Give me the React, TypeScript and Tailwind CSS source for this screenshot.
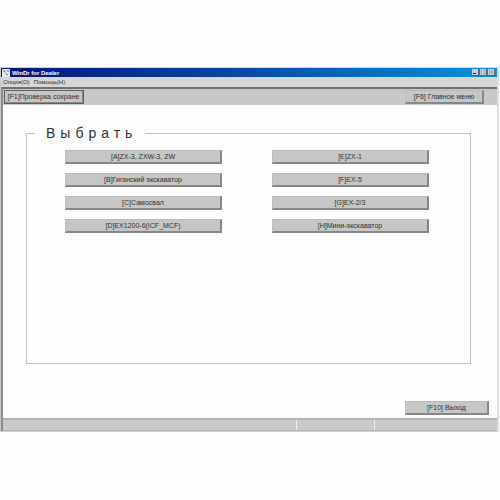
import { clsx } from "clsx";
import type { ReactNode } from "react";

interface Machine {
  hotkey: string;
  name: string;
}

const machines: Machine[] = [
  { hotkey: "A", name: "ZX-3, ZXW-3, ZW" },
  { hotkey: "E", name: "ZX-1" },
  { hotkey: "B", name: "Гиганский экскаватор" },
  { hotkey: "F", name: "EX-5" },
  { hotkey: "C", name: "Самосвал" },
  { hotkey: "G", name: "EX-2/3" },
  { hotkey: "D", name: "EX1200-6(ICF_MCF)" },
  { hotkey: "H", name: "Мини-экскаватор" },
];

function BevelButton({ children, className }: { children: ReactNode; className?: string }) {
  return (
    <button
      type="button"
      className={clsx(
        "flex h-[14px] items-center justify-center whitespace-nowrap border-t border-l border-r-2 border-b-2 border-t-[#bababa] border-l-[#bebebe] border-r-[#868686] border-b-[#868686] bg-[#c6c6c6] text-[7px] leading-[8px] text-[#303030]",
        className
      )}
    >
      {children}
    </button>
  );
}

function CaptionButton({ label, children }: { label: string; children: ReactNode }) {
  return (
    <button
      type="button"
      aria-label={label}
      className="flex h-[7px] w-[7px] items-center justify-center border-r border-b border-[#566575] bg-[#c9d0d5]"
    >
      <svg viewBox="0 0 6 6" className="h-[6px] w-[6px]" fill="none">
        {children}
      </svg>
    </button>
  );
}

function TitleBar() {
  return (
    <header className="flex h-[9px] items-center bg-linear-to-r from-[#06107c] via-[#084ba8] to-[#0a93dc] pr-[2px] pl-px">
      <svg viewBox="0 0 8 8" className="h-2 w-2" aria-hidden="true">
        <rect width="8" height="8" fill="#e9e9e9" />
        <path d="M1 2h2.500M5 2h2M3 3.500l1 1M4.500 5.500h1.500" stroke="#5a5e70" strokeWidth="1" fill="none" />
      </svg>
      <h1 className="ml-[2px] flex-1 text-[6px] leading-[8px] font-bold whitespace-nowrap text-white">
        WinDr for Dealer
      </h1>
      <div className="flex gap-px">
        <CaptionButton label="Свернуть">
          <path d="M1 4.5h3" stroke="#202020" />
        </CaptionButton>
        <CaptionButton label="Развернуть">
          <path d="M1 1.5h4v3H1z" stroke="#9aa2a9" strokeWidth="0.7" />
        </CaptionButton>
        <CaptionButton label="Закрыть">
          <path d="M1 1l4 4M5 1L1 5" stroke="#7c858c" strokeWidth="0.7" />
        </CaptionButton>
      </div>
    </header>
  );
}

export default function App() {
  return (
    <div className="min-h-screen bg-[#fefefe] pt-[67px] font-['Liberation_Sans',Arial,sans-serif]">
      <div className="mr-px border-t border-r-2 border-b border-l border-t-[#d4d4d4] border-r-[#dedede] border-b-[#d0d0d0] border-l-[#c8c8c8]">
        <TitleBar />
        <nav className="flex h-[10px] items-center gap-[4px] bg-[#d6d6d6] pl-[2px] text-[6px] leading-[8px] text-[#2c2c2c]">
          <button type="button">Опция(O)</button>
          <button type="button">Помощь(H)</button>
        </nav>

        <div className="border-t-2 border-l-2 border-t-[#707070] border-l-[#8c8c8c]">
          <div className="flex items-center justify-between bg-[#c8c8c8] pt-px pr-[13px] pb-px pl-px">
            <BevelButton className="w-[80px] outline-1 outline-[#606060] -outline-offset-1">
              [F1]Проверка сохране
            </BevelButton>
            <BevelButton className="w-[79px]">[F6] Главное меню</BevelButton>
          </div>

          <main className="bg-[#fdfdfd] pt-[20px] pr-[8px] pb-[3px] pl-[23px]">
            <fieldset className="mr-[18px] h-[239px] border border-[#c0c0c0] pr-[41px] pl-[38px]">
              <legend className="-ml-[30px] pr-[8px] pl-[11px] text-[14px] leading-[16px] tracking-[5px] text-[#303030]">
                Выбрать
              </legend>
              <div className="grid grid-cols-2 gap-x-[50px] gap-y-[9px] pt-[9px]">
                {machines.map((m) => (
                  <BevelButton key={m.hotkey}>
                    [{m.hotkey}]{m.name}
                  </BevelButton>
                ))}
              </div>
            </fieldset>
            <div className="mt-[37px] flex justify-end">
              <BevelButton className="w-[84px]">[F10] Выход</BevelButton>
            </div>
          </main>

          <footer className="flex h-[13px] border-t-2 border-b border-t-[#b0b0b0] border-b-[#b4b4b4] bg-[#cacaca]">
            <div className="flex-1 border-r border-[#ededed]" />
            <div className="w-[78px] border-r border-[#ededed]" />
            <div className="w-[122px]" />
          </footer>
        </div>
      </div>
    </div>
  );
}
